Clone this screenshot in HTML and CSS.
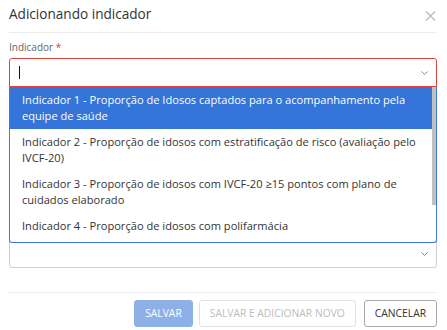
FILE: index.html
```html
<!DOCTYPE html>
<html lang="pt-BR">
<head>
<meta charset="utf-8">
<title>Adicionando indicador</title>
<link rel="stylesheet" href="styles.css">
</head>
<body>
<div class="modal">
  <div class="modal-header">
    <h1 class="modal-title">Adicionando indicador</h1>
    <button class="close" aria-label="Fechar">
      <svg width="11" height="10" viewBox="0 0 11 10"><path d="M1 0.5 L10 9.5 M10 0.5 L1 9.5" stroke="#bdbdbd" stroke-width="1.4" fill="none"/></svg>
    </button>
  </div>
  <div class="modal-body">
    <label class="label">Indicador <span class="req">*</span></label>
    <div class="field">
      <div class="input input-error">
        <span class="caret"></span>
        <svg class="chev" width="7" height="4" viewBox="0 0 7 4"><polyline points="0.5,0.5 3.5,3.5 6.5,0.5" stroke="#8a8a8a" stroke-width="1" fill="none"/></svg>
      </div>
      <div class="menu">
        <ul class="menu-list">
          <li class="opt active">Indicador 1 - Proporção de Idosos captados para o acompanhamento pela equipe de saúde</li>
          <li class="opt">Indicador 2 - Proporção de idosos com estratificação de risco (avaliação pelo IVCF-20)</li>
          <li class="opt">Indicador 3 - Proporção de idosos com IVCF-20 ≥15 pontos com plano de cuidados elaborado</li>
          <li class="opt">Indicador 4 - Proporção de idosos com polifarmácia</li>
        </ul>
        <div class="thumb"></div>
      </div>
    </div>
    <div class="field field-second">
      <div class="input">
        <svg class="chev" width="7" height="4" viewBox="0 0 7 4"><polyline points="0.5,0.5 3.5,3.5 6.5,0.5" stroke="#8a8a8a" stroke-width="1" fill="none"/></svg>
      </div>
    </div>
  </div>
  <div class="modal-footer">
    <button class="btn btn-primary">SALVAR</button>
    <button class="btn btn-disabled">SALVAR E ADICIONAR NOVO</button>
    <button class="btn btn-default">CANCELAR</button>
  </div>
</div>
</body>
</html>
```
FILE: styles.css
```css
* { box-sizing: border-box; }
html, body { margin: 0; padding: 0; background: #fff; }
body { font-family: "Open Sans", "DejaVu Sans", sans-serif; color: #333; width: 447px; height: 330px; overflow: hidden; }

.modal { padding: 0 10px 0 9px; }

.modal-header {
  display: flex;
  justify-content: space-between;
  align-items: flex-start;
  height: 33px;
  padding-top: 3px;
  border-bottom: 1px solid #ececec;
}
.modal-title {
  margin: 0;
  font-size: 13.6px;
  line-height: 22px;
  font-weight: 400;
  color: #333;
}
.close {
  border: 0;
  background: none;
  padding: 0;
  margin: 8px 1px 0 0;
  width: 11px;
  height: 10px;
  display: block;
}
.close svg { display: block; }

.modal-body { padding: 7px 0 24px; }

.label {
  display: block;
  font-size: 10px;
  line-height: 14px;
  color: #666;
  margin-bottom: 4px;
}
.req { color: #e53935; }

.field { position: relative; }
.field-second { margin-top: 152px; }

.input {
  height: 29px;
  border: 1px solid #cfcfcf;
  border-radius: 3px;
  display: flex;
  align-items: center;
  justify-content: space-between;
  padding: 0 8px 0 9px;
  background: #fff;
}
.input-error { border-color: #e0403a; border-radius: 3px 3px 0 0; }
.caret { display: block; width: 1px; height: 13px; background: #111; }
.field-second .input { justify-content: flex-end; }
.chev { display: block; }

.menu {
  position: absolute;
  top: 29px;
  left: 0;
  right: 0;
  height: 156px;
  border: 1px solid #3a78de;
  border-top: 0;
  border-radius: 0 0 3px 3px;
  background: #fff;
  overflow: hidden;
  z-index: 5;
  padding-right: 4px;
}
.menu-list { list-style: none; margin: 0; padding: 0; }
.opt {
  font-size: 11.1px;
  line-height: 16px;
  padding: 5px 12px;
  color: #333;
}
.opt.active { background: #3574d8; color: #fff; }
.thumb {
  position: absolute;
  top: 0;
  right: 0;
  width: 4px;
  height: 118px;
  background: #c1c1c1;
}

.modal-footer {
  border-top: 1px solid #ececec;
  display: flex;
  justify-content: flex-end;
  gap: 6px;
  padding-top: 7px;
}
.btn {
  font-family: "Open Sans", "DejaVu Sans", sans-serif;
  font-size: 10.3px;
  height: 27px;
  padding: 0 10px;
  border-radius: 3px;
  border: 1px solid transparent;
  background: #fff;
  line-height: 25px;
}
.btn-primary { background: #8eb0e9; border-color: #8eb0e9; color: #fff; }
.btn-disabled { border-color: #e2e2e2; color: #bdbdbd; }
.btn-default { border-color: #a8a8a8; color: #333; margin-left: 2px; }
```
